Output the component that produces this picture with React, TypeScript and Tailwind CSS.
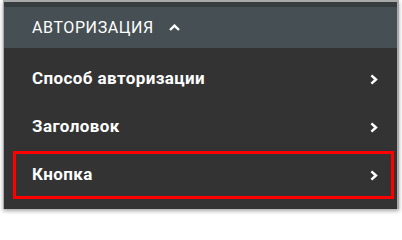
import React from "react";

function ChevronRight() {
  return (
    <svg width="8" height="11" viewBox="0 0 8 11" className="block">
      <path d="M1.4 1.4 L5.9 5.5 L1.4 9.6" fill="none" stroke="#ffffff" strokeWidth="2.6" strokeLinecap="butt" strokeLinejoin="miter" />
    </svg>
  );
}

function ChevronUp() {
  return (
    <svg width="11" height="7" viewBox="0 0 11 7" className="block">
      <path d="M1 6 L5.5 1.6 L10 6" fill="none" stroke="#ffffff" strokeWidth="2.4" />
    </svg>
  );
}

function Row({ label, active }: { label: string; active?: boolean }) {
  return (
    <div
      className={
        "ml-[9px] mr-[3px] h-[48px] flex items-center justify-between border-[3px] pl-[16px] pr-[13px] " +
        (active ? "border-[#ff0000]" : "border-transparent")
      }
    >
      <span className="text-white font-bold text-[17px] leading-none tracking-[0.4px] pb-[1px]">{label}</span>
      <ChevronRight />
    </div>
  );
}

export default function App() {
  return (
    <div className="w-[402px] h-[221px] bg-white" style={{ fontFamily: "Roboto, 'Liberation Sans', Arial, sans-serif" }}>
      <div className="ml-[3px] w-[396px] border-l border-r-2 border-t-2 border-[#a9a9a9] shadow-[0_2px_4px_rgba(0,0,0,0.35)]">
        <div className="h-[5px] bg-[#383d40]" />
        <div className="h-[41px] bg-[#465054] flex items-center pl-[28px] gap-[15px]">
          <span className="text-white text-[16px] leading-none tracking-[0.6px]">АВТОРИЗАЦИЯ</span>
          <ChevronUp />
        </div>
        <div className="bg-[#333333] pt-[7px] pb-[10px]">
          <Row label="Способ авторизации" />
          <Row label="Заголовок" />
          <Row label="Кнопка" active />
        </div>
      </div>
    </div>
  );
}
